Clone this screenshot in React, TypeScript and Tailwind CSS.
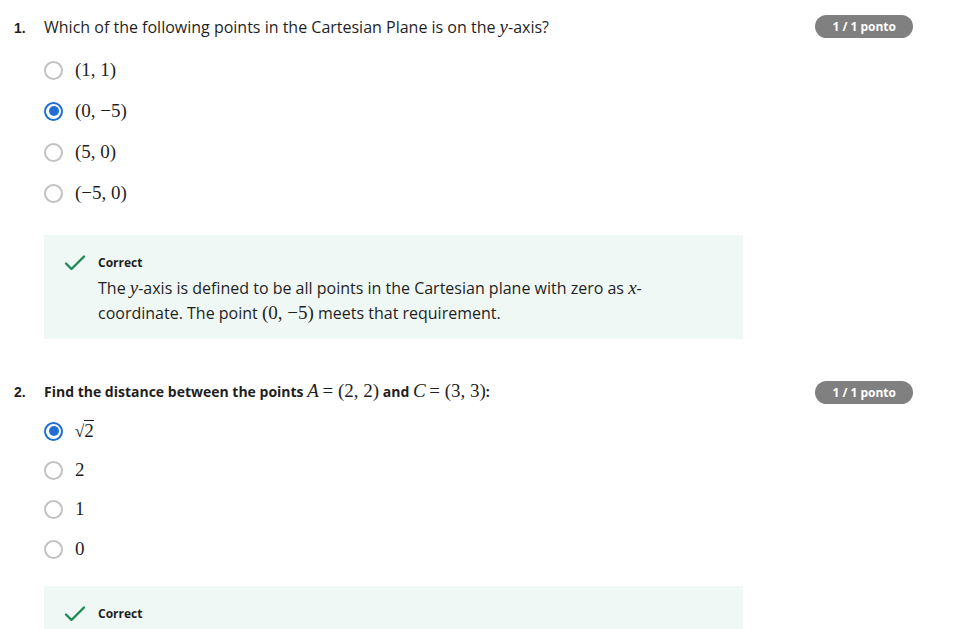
import React from "react";

const sans = "font-['Open_Sans',sans-serif]";
const serif = "font-['Liberation_Serif',serif]";

function Radio({ checked }: { checked?: boolean }) {
  if (checked)
    return (
      <span className="flex h-[19px] w-[19px] shrink-0 items-center justify-center rounded-full border-[2.5px] border-[#1f6fd6]">
        <span className="h-[10px] w-[10px] rounded-full bg-[#1f6fd6]" />
      </span>
    );
  return (
    <span className="h-[19px] w-[19px] shrink-0 rounded-full border-2 border-[#c2c2c2] bg-white" />
  );
}

function Badge({ className = "" }: { className?: string }) {
  return (
    <span className={`${sans} ${className} block rounded-full bg-[#808080] px-[17px] py-[3px] text-[12px] font-bold leading-[17px] text-white`}>
      1 / 1 ponto
    </span>
  );
}

function Check() {
  return (
    <svg width="22" height="18" viewBox="0 0 22 18" fill="none" className="shrink-0">
      <path d="M2 9.5L7.5 15L20 2.5" stroke="#1f8a55" strokeWidth="2.4" strokeLinecap="round" strokeLinejoin="round" />
    </svg>
  );
}

function M({ children }: { children: React.ReactNode }) {
  return <span className={`${serif} text-[19px] leading-none`}>{children}</span>;
}

function I({ children }: { children: React.ReactNode }) {
  return <span className={`${serif} text-[19px] italic leading-none`}>{children}</span>;
}

function Option({ checked, children, gap }: { checked?: boolean; children: React.ReactNode; gap: string }) {
  return (
    <div className={`flex items-center gap-[12px] ${gap}`}>
      <Radio checked={checked} />
      <span className={`${serif} text-[19px] leading-[24px] text-[#1f1f1f]`}>{children}</span>
    </div>
  );
}

function Feedback({ children }: { children?: React.ReactNode }) {
  return (
    <div className="w-[699px] bg-[#f0f8f5] pb-[13px] pl-[20px] pr-[20px] pt-[19px]">
      <div className="flex items-center gap-[12px]">
        <Check />
        <span className={`${sans} text-[12px] font-bold text-[#1f1f1f]`}>Correct</span>
      </div>
      {children && (
        <p className={`${sans} ml-[34px] mt-[4px] text-[16px] leading-[25px] text-[#1f1f1f]`}>{children}</p>
      )}
    </div>
  );
}

export default function App() {
  return (
    <div className={`${sans} h-[629px] w-[970px] overflow-hidden bg-white text-[#1f1f1f]`}>
      {/* Question 1 */}
      <div className="flex items-start justify-between pl-[14px] pr-[57px] pt-[15px]">
        <div className="flex items-baseline">
          <span className="w-[30px] font-['Liberation_Sans',sans-serif] text-[14px] font-bold">1.</span>
          <span className="text-[16px] leading-[25px]">
            Which of the following points in the Cartesian Plane is on the <I>y</I>-axis?
          </span>
        </div>
        <Badge />
      </div>

      <div className="pl-[44px] pt-[18px]">
        <Option gap="h-[24px]">(1, 1)</Option>
        <Option gap="mt-[17px] h-[24px]" checked>(0, −5)</Option>
        <Option gap="mt-[17px] h-[24px]">(5, 0)</Option>
        <Option gap="mt-[17px] h-[24px]">(−5, 0)</Option>

        <div className="mt-[30px]">
          <Feedback>
            The <I>y</I>-axis is defined to be all points in the Cartesian plane with zero as <I>x</I>-
            <br />
            coordinate. The point <M>(0, −5)</M> meets that requirement.
          </Feedback>
        </div>
      </div>

      {/* Question 2 */}
      <div className="flex items-start justify-between pl-[14px] pr-[57px] pt-[40px]">
        <div className="flex items-baseline">
          <span className="w-[30px] font-['Liberation_Sans',sans-serif] text-[14px] font-bold">2.</span>
          <span className="text-[14px] font-bold leading-[25px]">
            Find the distance between the points <span className="font-normal"><I>A</I> <M>= (2, 2)</M></span> and{" "}
            <span className="font-normal"><I>C</I> <M>= (3, 3)</M></span>:
          </span>
        </div>
        <Badge className="mt-[2px]" />
      </div>

      <div className="pl-[44px] pt-[15px]">
        <Option gap="h-[24px]" checked>
          <span className="inline-flex items-start">
            <span className="text-[17px]">√</span>
            <span className="border-t border-[#1f1f1f] leading-[20px]">2</span>
          </span>
        </Option>
        <Option gap="mt-[15px] h-[24px]">2</Option>
        <Option gap="mt-[15px] h-[24px]">1</Option>
        <Option gap="mt-[16px] h-[24px]">0</Option>

        <div className="mt-[25px]">
          <Feedback />
        </div>
      </div>
    </div>
  );
}
